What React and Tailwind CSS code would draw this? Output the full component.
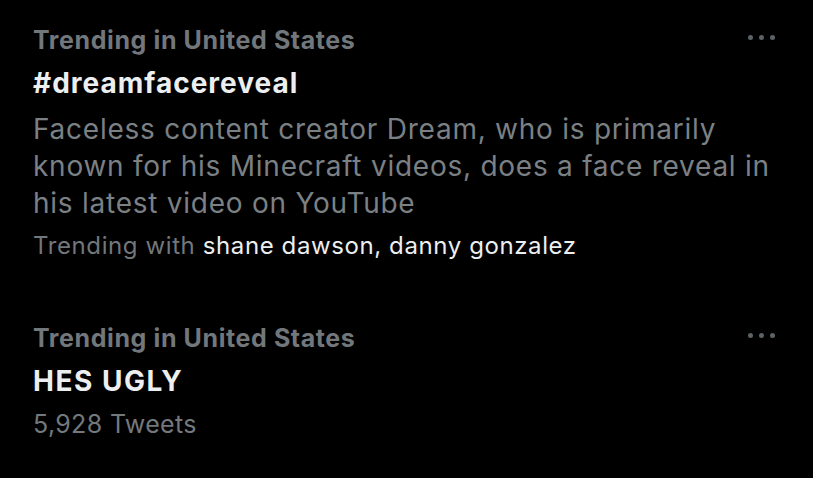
function Dots() {
  return (
    <div className="flex gap-[6px] pt-[10px] pr-[38px]">
      <span className="block w-[5px] h-[5px] rounded-full bg-[#5b6367]" />
      <span className="block w-[5px] h-[5px] rounded-full bg-[#5b6367]" />
      <span className="block w-[5px] h-[5px] rounded-full bg-[#5b6367]" />
    </div>
  );
}

export default function App() {
  return (
    <div className="w-[813px] h-[478px] bg-black overflow-hidden pl-[33px] pt-[25px]" style={{ fontFamily: "Inter, 'Noto Sans', sans-serif" }}>
      <div className="flex justify-between items-start">
        <div className="text-[25px] leading-[30px] font-bold text-[#72777c] tracking-[0.6px]">Trending in United States</div>
        <Dots />
      </div>
      <div className="text-[28px] leading-[36px] font-bold text-[#eceeef] mt-[10px] tracking-[1px]">#dreamfacereveal</div>
      <div className="text-[28px] leading-[37px] text-[#7b8084] mt-[10px] w-[745px] tracking-[0.75px]">
        Faceless content creator Dream, who is primarily known for his Minecraft videos, does a face reveal in his latest video on YouTube
      </div>
      <div className="text-[24px] leading-[32px] text-[#72777b] mt-[8px] tracking-[0.6px]">
        Trending with <span className="text-[#eceeef]">shane dawson, danny gonzalez</span>
      </div>
      <div className="flex justify-between items-start mt-[61px]">
        <div className="text-[25px] leading-[30px] font-bold text-[#72777c] tracking-[0.6px]">Trending in United States</div>
        <Dots />
      </div>
      <div className="text-[28px] leading-[36px] font-bold text-[#eceeef] mt-[10px] tracking-[1.5px]">HES UGLY</div>
      <div className="text-[25px] leading-[32px] text-[#73787d] mt-[9px] tracking-[0.35px]">5,928 Tweets</div>
    </div>
  );
}
